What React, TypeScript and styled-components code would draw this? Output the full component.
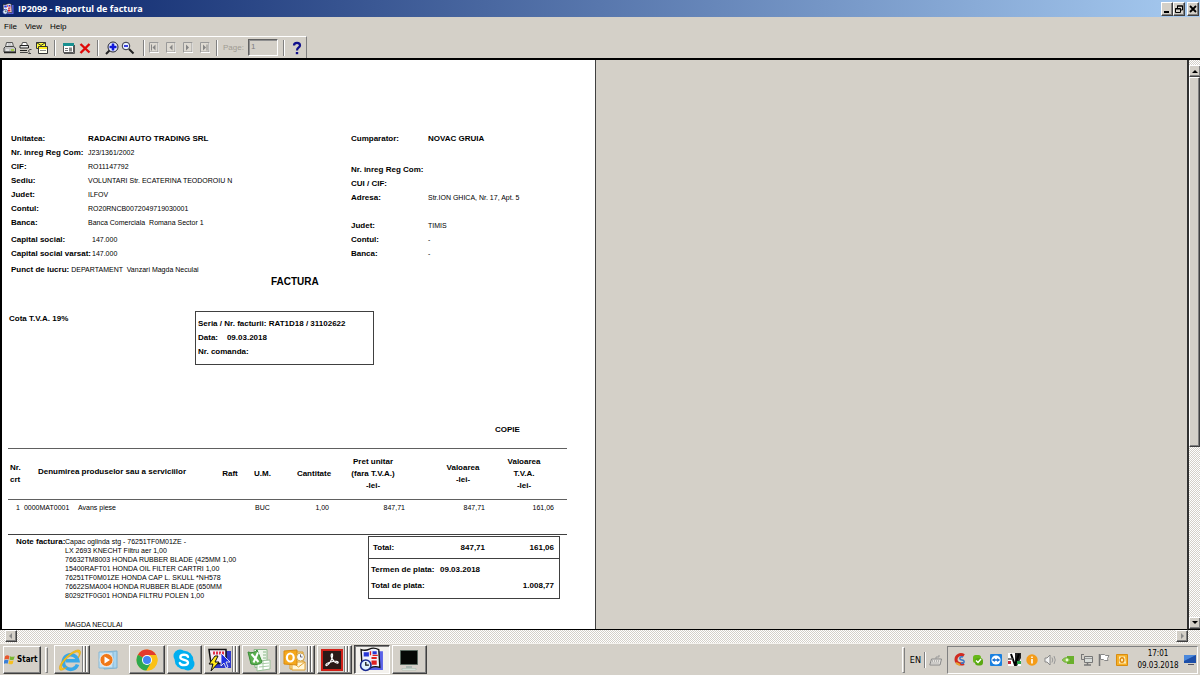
import React from 'react';
import styled, { createGlobalStyle, css } from 'styled-components';

const face = '#d4d0c8';
const ui = '"DejaVu Sans Condensed", "DejaVu Sans", sans-serif';
const print = '"Liberation Sans", Arial, sans-serif';

const raised = css`
  border: 1px solid;
  border-color: #fff #404040 #404040 #fff;
  box-shadow: inset -1px -1px 0 #808080;
`;

const Global = createGlobalStyle`
  *, *::before, *::after { box-sizing: border-box; }
  body { margin: 0; background: ${face}; color: #000; font-family: ${ui}; font-size: 9px; }
  button, input { font: inherit; color: inherit; margin: 0; padding: 0; border: 0; border-radius: 0; background: none; }
  p, dl, dd, dt, h1, h2 { margin: 0; }
  svg { display: block; flex: none; }
`;

const Screen = styled.div`
  display: flex;
  flex-direction: column;
  height: 100vh;
  overflow: hidden;
`;

const TitleBar = styled.header`
  display: flex;
  align-items: center;
  height: 17px;
  padding: 0 1px 0 2px;
  gap: 4px;
  background: linear-gradient(90deg, #0a246a, #a6caf0);
`;

const Title = styled.h1`
  flex: 1;
  color: #fff;
  font-family: "Open Sans", "Noto Sans", sans-serif;
  font-size: 9px;
  line-height: 16px;
  font-weight: 700;
  white-space: nowrap;
`;

const WindowButtons = styled.div`
  display: flex;
`;

const WindowButton = styled.button<{ $apart?: boolean }>`
  ${raised}
  display: grid;
  place-items: center;
  width: 12px;
  height: 14px;
  margin-left: ${p => (p.$apart ? 2 : 0)}px;
  background: ${face};
`;

const MenuBar = styled.nav`
  display: flex;
  height: 19px;
  gap: 8px;
  padding-left: 4px;
`;

const MenuItem = styled.button`
  font-family: ${print};
  font-size: 8px;
  line-height: 18px;
`;

const Tools = styled.div`
  display: flex;
  align-items: center;
  align-self: flex-start;
  height: 22px;
  padding: 0 1px 0 2px;
  border: solid;
  border-width: 1px 1px 0 0;
  border-color: #fff #808080;
`;

const Tool = styled.button<{ $w?: number }>`
  display: grid;
  place-items: center;
  width: ${p => p.$w ?? 16}px;
  height: 18px;
`;

const Groove = styled.span<{ $before: number; $after: number }>`
  width: 2px;
  height: 16px;
  margin: 0 ${p => p.$after}px 0 ${p => p.$before}px;
  border-left: 1px solid #808080;
  border-right: 1px solid #fff;
`;

const PageField = styled.label`
  display: flex;
  align-items: center;
  gap: 4px;
  color: #a09c94;
  font-family: ${print};
  font-size: 8px;
  line-height: 16px;
`;

const PageInput = styled.input`
  width: 30px;
  height: 17px;
  padding: 0 0 3px 2px;
  color: #808080;
  border: 1px solid;
  border-color: #606060 #fff #fff #606060;
  box-shadow: inset 1px 1px 0 #909090;
`;

const Viewer = styled.main`
  flex: 1;
  min-height: 0;
  display: flex;
  border-top: 2px solid #000;
`;

const Canvas = styled.div`
  flex: 1;
  min-width: 0;
  overflow: hidden;
  border-left: 2px solid #000;
  border-bottom: 1px solid #000;
`;

const Paper = styled.article`
  width: 594px;
  min-height: 100%;
  padding: 72px 27px 0 6px;
  background: #fff;
  border-right: 1px solid #404040;
  font-family: ${print};
  font-size: 7px;
  line-height: 14px;
  white-space: pre;
`;

const bold = css`
  font-size: 8px;
  font-weight: 700;
`;

const Strong = styled.span`
  ${bold}
`;

const Parties = styled.section`
  display: grid;
  grid-template-columns: 340px 1fr;
  padding-left: 3px;
`;

const Details = styled.dl`
  display: flex;
  flex-direction: column;
`;

const Detail = styled.div<{ $gap?: number }>`
  display: flex;
  height: 14px;
  margin-top: ${p => p.$gap ?? 0}px;
`;

const Label = styled.dt<{ $auto?: boolean }>`
  ${bold}
  width: ${p => (p.$auto ? 'auto' : '77px')};
  padding-right: ${p => (p.$auto ? 2 : 0)}px;
`;

const Value = styled.dd<{ $indent?: boolean }>`
  padding-left: ${p => (p.$indent ? 4 : 0)}px;
`;

const Heading = styled.h2`
  padding-left: 263px;
  font-size: 10px;
  line-height: 14px;
  margin-top: -2px;
`;

const Series = styled.section`
  display: grid;
  grid-template-columns: 187px 179px;
  margin-top: 22px;
`;

const Vat = styled.p`
  padding: 1px 0 0 1px;
`;

const SeriesBox = styled.div`
  height: 54px;
  padding: 5px 2px;
  border: 1px solid #404040;
`;

const Line = styled.p`
  height: 14px;
`;

const Copy = styled.p`
  margin-top: 58px;
  padding-left: 487px;
`;

const Items = styled.table`
  width: 559px;
  margin-top: 11px;
  border-collapse: collapse;
  table-layout: fixed;
  border-bottom: 1px solid #404040;
`;

const Th = styled.th<{ $left?: number; $right?: number; $bottom?: number; $start?: boolean }>`
  ${bold}
  height: 51px;
  padding: 0 ${p => p.$right ?? 0}px ${p => p.$bottom ?? 0}px ${p => p.$left ?? 0}px;
  border-top: 1px solid #606060;
  border-bottom: 1px solid #606060;
  line-height: 12px;
  text-align: ${p => (p.$start ? 'left' : 'center')};
  vertical-align: middle;
`;

const Td = styled.td<{ $right?: number; $align?: string }>`
  height: 35px;
  padding: 3px ${p => p.$right ?? 0}px 0 0;
  line-height: 10px;
  vertical-align: top;
  text-align: ${p => p.$align ?? 'left'};
`;

const Footer = styled.section`
  display: grid;
  grid-template-columns: 49px 303px 192px;
  padding-left: 8px;
`;

const Notes = styled.div`
  padding-top: 2px;
  line-height: 9px;
`;

const Signature = styled.p`
  margin-top: 20px;
`;

const Totals = styled.dl`
  height: 63px;
  margin-top: 1px;
  border: 1px solid #404040;
`;

const TotalRow = styled.div<{ $first?: boolean }>`
  ${bold}
  display: grid;
  grid-template-columns: ${p => (p.$first ? '56px 56px 1fr' : '69px 47px 1fr')};
  height: ${p => (p.$first ? 22 : 16)}px;
  padding: 0 5px 0 ${p => (p.$first ? 4 : 2)}px;
  line-height: ${p => (p.$first ? 21 : 16)}px;
  border-bottom: ${p => (p.$first ? '1px solid #404040' : '0')};
`;

const TotalLines = styled.div`
  padding-top: 3px;
`;

const Amount = styled.dd<{ $col?: number }>`
  grid-column: ${p => p.$col ?? 'auto'};
  text-align: right;
`;

const dither = css`
  background: repeating-conic-gradient(#fff 0% 25%, ${face} 0% 50%) 0 0 / 2px 2px;
`;

const VScroll = styled.div`
  display: flex;
  flex-direction: column;
  width: 13px;
  padding-top: 5px;
  border-left: 2px solid #303030;
  border-bottom: 1px solid #000;
  ${dither}
`;

const ScrollButton = styled.button`
  ${raised}
  flex: none;
  display: grid;
  place-items: center;
  width: 12px;
  height: 12px;
  background: ${face};
`;

const Thumb = styled.div`
  ${raised}
  flex: 369 0 0;
  background: ${face};
`;

const Track = styled.div`
  flex: 171 0 0;
`;

const HScroll = styled.div`
  display: flex;
  justify-content: space-between;
  height: 13px;
  padding: 0 12px 0 5px;
  ${dither}
`;

const TaskBar = styled.footer`
  display: flex;
  align-items: center;
  height: 32px;
  padding: 0 2px 0 3px;
  background: ${face};
  border-top: 1px solid #f4f2ee;
`;

const StartButton = styled.button`
  ${raised}
  display: flex;
  align-items: center;
  gap: 1px;
  width: 38px;
  height: 28px;
  font-size: 8px;
  font-weight: 700;
`;

const Grip = styled.span<{ $before: number; $after: number }>`
  width: 3px;
  height: 26px;
  margin: 0 ${p => p.$after}px 0 ${p => p.$before}px;
  border: 1px solid;
  border-color: #fff #808080 #808080 #fff;
`;

const Tasks = styled.div`
  display: grid;
  grid-template-columns: repeat(8, 1fr);
  gap: 2px;
  width: 298px;
  margin-left: 8px;
`;

const pressed = css`
  border: 1px solid;
  border-color: #404040 #fff #fff #404040;
  box-shadow: inset 1px 1px 0 #808080;
  background: #f4f2ee;
`;

const Task = styled.button<{ $active?: boolean; $stack?: boolean }>`
  ${p => (p.$active ? pressed : raised)}
  display: flex;
  align-items: center;
  justify-content: ${p => (p.$stack ? 'flex-start' : 'center')};
  height: 29px;
  padding-left: ${p => (p.$stack ? 3 : 0)}px;
  ${p =>
    p.$stack &&
    css`
      background: linear-gradient(90deg, #808080 1px, #fff 1px 2px, transparent 2px 3px, #606060 3px 4px, #fff 4px 5px, transparent 5px) right / 7px 100% no-repeat;
    `}
`;

const FirstTask = styled(Task)`
  width: 36px;
`;

const Player = styled.button`
  width: 24px;
  margin-left: 7px;
`;

const Fill = styled.span`
  flex: 1;
`;

const Lang = styled.button`
  font-size: 9px;
`;

const Tray = styled.div`
  display: flex;
  align-items: center;
  height: 28px;
  margin-left: 3px;
  padding: 0 0 0 3px;
  border: 1px solid;
  border-color: #808080 #fff #fff #808080;
`;

const TrayButton = styled.button<{ $w?: number }>`
  display: grid;
  place-items: center;
  width: ${p => p.$w ?? 18}px;
  height: 18px;
`;

const Clock = styled.time`
  width: 50px;
  margin-left: 2px;
  text-align: center;
  font-size: 8px;
  line-height: 12px;
`;

const AppIcon = ({ s = 12 }: { s?: number }) => (
  <svg width={s} height={s} viewBox="0 0 24 24">
    <path d="M7 4h16v18H9z" fill="#5a62e8" />
    <path d="M2 2.500q4 1.500 8-.5t9 .5l1 17q-5-1.500-9 .5t-8 0z" fill="#eef2fc" stroke="#111" strokeWidth="1.300" />
    <path d="M4.500 5h5v4h-5zM13 4h4v3h-4z" fill="#2838d8" />
    <path d="M12 9.500h5v2h-5zM12 13h5v4h-5z" fill="#e02020" />
    <path d="M11 4v4M13 8h5" stroke="#e02020" strokeWidth="1.300" />
    <circle cx="6.500" cy="17.500" r="5" fill="#dff2ff" stroke="#1a2a90" strokeWidth="1.500" />
    <path d="M6.500 14.500v3h3" fill="none" stroke="#111" strokeWidth="1.200" />
  </svg>
);

const Printer = ({ setup }: { setup?: boolean }) => (
  <svg width="14" height="14" viewBox="0 0 14 14">
    {setup ? (
      <>
        <path d="M3.500 1.500h4l1 3h-6z" fill="#fff" stroke="#555" />
        <path d="M1 4.500h8.500v2.500H1z" fill="#e8e8e8" stroke="#222" />
        <path d="M1 9.500h7" stroke="#222" />
        <path d="M1 11.500h7.500l1.200 1h2.300M12.500 8.500H10.500l-1 1.500 1 1.500" fill="none" stroke="#444" />
      </>
    ) : (
      <>
        <path d="M3.500 1.500h6l1 4.500H2.500z" fill="#fff" stroke="#555" />
        <path d="M4.500 3h4M4.500 5h5" stroke="#999" />
        <path d="M1 7l1.500-1.500h8L12.500 7v4H1z" fill="#c4c4c4" stroke="#444" />
        <path d="M1 11.500h12" stroke="#222" strokeWidth="1.500" />
        <path d="M8 9h3" stroke="#9acd20" strokeWidth="1.500" />
        <path d="M3 9h3" stroke="#fff" />
      </>
    )}
  </svg>
);

const Mail = () => (
  <svg width="14" height="14" viewBox="0 0 14 14">
    <path d="M1.500 1.500h9v6h-9z" fill="#ff3" stroke="#333" />
    <path d="M1.500 1.500l4.500 3 4.500-3" fill="none" stroke="#333" />
    <path d="M3.500 5.500h9v7h-9z" fill="#fffff0" stroke="#333" />
    <path d="M4 6h8v2H4z" fill="#ffee20" />
    <path d="M5 9.500h6" stroke="#888" />
  </svg>
);

const PropWindow = () => (
  <svg width="14" height="14" viewBox="0 0 14 14">
    <path d="M1.500 2.500h10v9h-10z" fill="#fff" stroke="#555" />
    <path d="M1 2h11v3H1z" fill="#189090" />
    <path d="M3 7.500h3M3 9.500h3" stroke="#777" />
    <path d="M7 6.500h3v4H7z" fill="#888" />
    <path d="M2 12.500h10.500V4" fill="none" stroke="#555" />
  </svg>
);

const Cross = () => (
  <svg width="12" height="12" viewBox="0 0 12 12">
    <path d="M1.500 2l9 8.500M10.500 2l-9 9" stroke="#e00808" strokeWidth="2.400" />
  </svg>
);

const Lens = ({ plus }: { plus?: boolean }) =>
  plus ? (
    <svg width="14" height="14" viewBox="0 0 14 14">
      <circle cx="8" cy="6" r="5" fill="#e8f0ff" stroke="#223" />
      <path d="M8 2.500v7M4.500 6h7" stroke="#1018d8" strokeWidth="2.600" />
      <path d="M4.500 9.500L1 13" stroke="#222" strokeWidth="2" />
    </svg>
  ) : (
    <svg width="14" height="14" viewBox="0 0 14 14">
      <circle cx="5" cy="5" r="3.800" fill="#e8f0ff" stroke="#334" />
      <path d="M3 5h4" stroke="#1018d8" strokeWidth="1.600" />
      <path d="M8 8l4.500 4.500" stroke="#222" strokeWidth="2" />
    </svg>
  );

const NavIcon = ({ back, end }: { back?: boolean; end?: boolean }) => (
  <svg width="10" height="11" viewBox="0 0 10 11">
    <path d="M.5.500h8.500v9.500H.5z" fill="#dedad2" stroke="#999" />
    <path d="M1 10.500h9V1" fill="none" stroke="#fff" />
    <g fill="#858585" transform={back ? undefined : 'translate(9.500 0) scale(-1 1)'}>
      <path d="M6.500 2.500v6L3.500 5.500z" />
      {end && <path d="M2 2.500h1v6H2z" />}
    </g>
  </svg>
);

const Help = () => (
  <svg width="10" height="14" viewBox="0 0 10 14">
    <path d="M2 4.500C2 1 8 1 8 4.500 8 6.500 5 6.500 5 9.500" fill="none" stroke="#10108c" strokeWidth="2.200" />
    <path d="M3.800 11h2.400v2.200H3.800z" fill="#10108c" />
  </svg>
);

const arrows = {
  up: 'M0 5h6L3 2z',
  down: 'M0 1h6L3 4z',
  left: 'M4 0v6L1 3z',
  right: 'M2 0v6l3-3z',
};

const Arrow = ({ dir, dim }: { dir: keyof typeof arrows; dim?: boolean }) => (
  <svg width="6" height="6" viewBox="0 0 6 6">
    <path d={arrows[dir]} fill={dim ? '#8a8a8a' : '#000'} />
  </svg>
);

const Flag = () => (
  <svg width="12" height="12" viewBox="0 0 11 11">
    <path d="M1 2q2-1.500 4 0L4.300 5Q2.500 4 .4 5z" fill="#e8552a" />
    <path d="M5.600 2q2 1 4.200 0L9 5q-2 1-4 0z" fill="#7ab832" />
    <path d="M.3 5.800q2-1 3.800 0L3.300 9Q2 8-.4 9z" fill="#3a80d8" />
    <path d="M4.800 5.800q2 1 4 0L8 9q-2 1-4 0z" fill="#f6c020" />
  </svg>
);

const Explorer = () => (
  <svg width="24" height="24" viewBox="0 0 24 24">
    <path d="M19.500 16.500A7.300 7.300 0 1 1 19.800 12.800H7.500" fill="none" stroke="#38a8e8" strokeWidth="3.600" />
    <path d="M2 22C-2 17 14 1 21 2c3 1 1 6-1 8 2-4 1-6-1-6C14 4 1 17 4 20c1 1 3 0 5-1-2 2-5 4-7 3z" fill="#f8c418" stroke="#d89a10" strokeWidth=".5" />
  </svg>
);

const PlayerIcon = () => (
  <svg width="22" height="22" viewBox="0 0 22 22">
    <path d="M7 3l13-1v17l-13 1z" fill="#a8d4ee" stroke="#7ab0d0" />
    <path d="M2 3h14v16H2z" fill="#c4e2f4" stroke="#86b8d6" />
    <circle cx="9.500" cy="11" r="6.500" fill="#f07818" stroke="#fff" strokeWidth=".7" />
    <path d="M7.500 7.500v7l5.500-3.500z" fill="#fff" />
  </svg>
);

const Chrome = () => (
  <svg width="22" height="22" viewBox="0 0 22 22">
    <circle cx="11" cy="11" r="10.500" fill="#fbc116" />
    <path d="M11 11L1.900 5.700A10.500 10.500 0 0 1 20.200 6H11z" fill="#e33b2e" />
    <path d="M11 11L1.900 5.700A10.500 10.500 0 0 0 10.400 21.500L15.300 13.500z" fill="#2da94f" />
    <path d="M11 6h9.200A10.500 10.500 0 0 1 10.400 21.500l5-8z" fill="#fbc116" />
    <circle cx="11" cy="11" r="5" fill="#fff" />
    <circle cx="11" cy="11" r="4" fill="#4285f4" />
  </svg>
);

const Skype = () => (
  <svg width="22" height="22" viewBox="0 0 22 22">
    <circle cx="7" cy="7" r="6.500" fill="#00aff0" />
    <circle cx="15" cy="15" r="6.500" fill="#00aff0" />
    <circle cx="11" cy="11" r="9.300" fill="#00aff0" />
    <path d="M15 7.800C14 5 7.300 5 7.300 8.200c0 3.300 7.700 2 7.700 5.400 0 3.400-7 3.400-8.200.4" fill="none" stroke="#fff" strokeWidth="2.300" strokeLinecap="round" />
  </svg>
);

const Editor = () => (
  <svg width="24" height="24" viewBox="0 0 24 24">
    <path d="M4 3h19v17H4z" fill="#3038c8" />
    <path d="M1 1.500h17v14H3z" fill="#f4e8f4" stroke="#111" strokeWidth="1.500" />
    <path d="M5 5h12" stroke="#e03048" strokeWidth="3" strokeDasharray="2 1" />
    <path d="M13 5v13l3-3 2 5 2-1-2-5h4z" fill="#2030e0" stroke="#fff" strokeWidth=".8" />
    <path d="M7 8l-6 8h4l-2 7 8-9H7l3-6z" fill="#ffe818" stroke="#111" />
  </svg>
);

const Excel = () => (
  <svg width="24" height="24" viewBox="0 0 24 24">
    <path d="M7 1.500h13v18H8z" fill="#eef6ec" stroke="#8ab888" />
    <path d="M16 4h3M16 7h3M16 10h3" stroke="#8ab888" />
    <path d="M10 13l13-1v9l-13 2z" fill="#fff" stroke="#9ac098" />
    <path d="M12 16l10-1M12 19l10-1M16 13v9" stroke="#a8cca6" />
    <path d="M1 4q6 2 9-2l5 12q-4 4-11 2z" fill="#5cb050" stroke="#3a8a38" />
    <path d="M4.500 6l7 8M11 4.500l-4.500 10" stroke="#fff" strokeWidth="2" />
  </svg>
);

const Outlook = () => (
  <svg width="23" height="24" viewBox="0 0 23 24">
    <path d="M7 4h13v17H7z" fill="#fce8a8" stroke="#dc9a20" />
    <path d="M9 14h13v8H9z" fill="#fff6d8" stroke="#e0a030" />
    <path d="M9 14l6.500 5L22 14" fill="none" stroke="#e0a030" />
    <path d="M1 3l13-1v15L1 16z" fill="#f5a81c" stroke="#d88a10" />
    <ellipse cx="7.300" cy="9.500" rx="3.400" ry="4" fill="none" stroke="#fff" strokeWidth="2.200" />
    <circle cx="17.500" cy="9" r="4" fill="#f4f8fc" stroke="#d0a040" />
    <path d="M17.500 6.500V9h2" fill="none" stroke="#667" />
  </svg>
);

const Acrobat = () => (
  <svg width="22" height="22" viewBox="0 0 22 22">
    <path d="M1 1h20v20H1z" fill="#2c1a18" stroke="#d02018" strokeWidth="2" />
    <path d="M10.500 5c2-1 1 4-1 7.500S5 17.500 4.800 16C4.800 14 12 12 15.500 12.300c3 .5 1.500 2.400-.5 1.500C12.500 13 9 7 10.500 5z" fill="none" stroke="#fff" strokeWidth="1.200" />
  </svg>
);

const Terminal = () => (
  <svg width="20" height="22" viewBox="0 0 20 22">
    <path d="M1.500 1.500h17v14h-17z" fill="#050805" stroke="#5a6a60" />
    <path d="M7 17h6v2H7z" fill="#a8b8b0" />
    <path d="M3 19.500h14v1.500H3z" fill="#e8f4ec" stroke="#9ab0a4" strokeWidth=".5" />
  </svg>
);

const Keyboard = () => (
  <svg width="13" height="12" viewBox="0 0 13 12">
    <path d="M2.500 5h10l-1.500 6H.8z" fill="#e4e2de" stroke="#888" />
    <path d="M3 7h8M2.500 9h8" stroke="#888" strokeDasharray="1 1" />
    <path d="M7 5V3h3V1" fill="none" stroke="#999" />
  </svg>
);

const trayIcons: [string, React.ReactNode][] = [
  ['CCleaner', <svg width="13" height="13" viewBox="0 0 13 13"><path d="M10 2.500C6 0 2 3 2 6.500S6 12 10 10.500" fill="none" stroke="#d02a20" strokeWidth="3" /><path d="M9 4C5 3 5 7 8 7s3 4-1 3" fill="none" stroke="#3b78c8" strokeWidth="1.500" /><path d="M2 10l4 2" stroke="#e8a030" strokeWidth="2" /></svg>],
  ['Sync', <svg width="12" height="12" viewBox="0 0 12 12"><rect x="1" y="1" width="8" height="8" rx="2.500" fill="#68b818" /><rect x="3" y="4" width="8" height="7.500" rx="3" fill="#5aa812" /><path d="M4 6.500l2 2L9 5" fill="none" stroke="#fff" strokeWidth="1.500" /></svg>],
  ['TeamViewer', <svg width="12" height="12" viewBox="0 0 12 12"><rect width="12" height="12" rx="1" fill="#1a80e0" /><circle cx="6" cy="6" r="4.600" fill="#fff" /><path d="M1.800 6l3-2v1.300h2.400V4l3 2-3 2V6.700H4.800V8z" fill="#1a70d0" /></svg>],
  ['VNC', <svg width="13" height="13" viewBox="0 0 13 13"><path d="M0 0h13v13H0z" fill="#fff" /><path d="M7 0h6v5L9 13H7z" fill="#222" /><path d="M3 1l4 11 4-11" fill="none" stroke="#000" strokeWidth="2" /><path d="M0 8h3v3H0z" fill="#c02838" /><path d="M9 8h4v3H9z" fill="#28a048" /><path d="M0 6h5" stroke="#555" strokeWidth="1.500" /></svg>],
  ['Information', <svg width="12" height="12" viewBox="0 0 12 12"><circle cx="6" cy="6" r="5.700" fill="#f49c18" /><path d="M5.200 2.400h1.600v1.600H5.200zM5.200 5h1.600v4.500H5.200z" fill="#fff" /></svg>],
  ['Volume', <svg width="12" height="12" viewBox="0 0 12 12"><path d="M1 4h2l3-3v10L3 8H1z" fill="#f4f4f4" stroke="#888" /><path d="M8 3.500q1.500 2.500 0 5M10 2q2.500 4 0 8" fill="none" stroke="#999" /></svg>],
  ['Graphics', <svg width="13" height="10" viewBox="0 0 13 10"><path d="M5 1h7v8H5z" fill="#6ab02c" /><path d="M0 5q4-5 9 0-5 5-9 0z" fill="#8cc84a" stroke="#5c9c2c" strokeWidth=".6" /><circle cx="5" cy="5" r="1.400" fill="#e8f8d8" /></svg>],
  ['Network', <svg width="13" height="13" viewBox="0 0 13 13"><path d="M1.500 1v5.500h3M1 1.500h3" fill="none" stroke="#777" /><path d="M4.500 3.500h8v6h-8z" fill="#d8dcd8" stroke="#777" /><path d="M5 5.500h7" stroke="#999" /><path d="M4 12h7M7.500 10v2" stroke="#777" strokeWidth="1.500" /></svg>],
  ['Action center', <svg width="12" height="13" viewBox="0 0 12 13"><path d="M1.500 1v12" stroke="#777" strokeWidth="1.500" /><path d="M2.500 1.500h4l1 1H11l-1.500 3L10 7.500H6.500l-1-1h-3z" fill="#fff" stroke="#888" /></svg>],
  ['Outlook', <svg width="12" height="12" viewBox="0 0 12 12"><path d="M.5.500h11v11H.5z" fill="#f6b028" stroke="#d88c10" /><path d="M3 2.500h6l1 7H3z" fill="#fdf0c0" /><ellipse cx="6" cy="6" rx="1.800" ry="2.300" fill="none" stroke="#e08a10" strokeWidth="1.500" /></svg>],
];

type Row = { label: string; value: string; gap?: number; auto?: boolean; indent?: boolean; strong?: boolean };

const seller: Row[] = [
  { label: 'Unitatea:', value: 'RADACINI AUTO TRADING SRL', strong: true },
  { label: 'Nr. inreg Reg Com:', value: 'J23/1361/2002' },
  { label: 'CIF:', value: 'RO11147792' },
  { label: 'Sediu:', value: 'VOLUNTARI Str. ECATERINA TEODOROIU N' },
  { label: 'Judet:', value: 'ILFOV' },
  { label: 'Contul:', value: 'RO20RNCB0072049719030001' },
  { label: 'Banca:', value: 'Banca Comerciala  Romana Sector 1' },
  { label: 'Capital social:', value: '147.000', gap: 3, indent: true },
  { label: 'Capital social varsat:', value: '147.000', indent: true },
  { label: 'Punct de lucru:', value: 'DEPARTAMENT  Vanzari Magda Neculai', gap: 2, auto: true },
];

const buyer: Row[] = [
  { label: 'Cumparator:', value: 'NOVAC GRUIA', strong: true },
  { label: 'Nr. inreg Reg Com:', value: '', gap: 17 },
  { label: 'CUI / CIF:', value: '' },
  { label: 'Adresa:', value: 'Str.ION GHICA, Nr. 17, Apt. 5' },
  { label: 'Judet:', value: 'TIMIS', gap: 14 },
  { label: 'Contul:', value: '-' },
  { label: 'Banca:', value: '-' },
];

const notes = `Capac oglinda stg - 76251TF0M01ZE -
LX 2693 KNECHT Filtru aer 1,00
76632TM8003 HONDA RUBBER BLADE (425MM 1,00
15400RAFT01 HONDA OIL FILTER CARTRI 1,00
76251TF0M01ZE HONDA CAP L. SKULL *NH578
76622SMA004 HONDA RUBBER BLADE (650MM
80292TF0G01 HONDA FILTRU POLEN 1,00`;

const Party = ({ rows }: { rows: Row[] }) => (
  <Details>
    {rows.map(r => (
      <Detail key={r.label} $gap={r.gap}>
        <Label $auto={r.auto}>{r.label}</Label>
        <Value $indent={r.indent}>{r.strong ? <Strong>{r.value}</Strong> : r.value}</Value>
      </Detail>
    ))}
  </Details>
);

const Invoice = () => (
  <Paper>
    <Parties>
      <Party rows={seller} />
      <Party rows={buyer} />
    </Parties>
    <Heading>FACTURA</Heading>
    <Series>
      <Vat><Strong>Cota T.V.A. 19%</Strong></Vat>
      <SeriesBox>
        <Line><Strong>Seria / Nr. facturii: RAT1D18 / 31102622</Strong></Line>
        <Line><Strong>Data:    09.03.2018</Strong></Line>
        <Line><Strong>Nr. comanda:</Strong></Line>
      </SeriesBox>
    </Series>
    <Copy><Strong>COPIE</Strong></Copy>
    <Items>
      <colgroup>
        {[14, 56, 144, 16, 49, 54, 64, 80, 82].map((w, i) => <col key={i} width={w} />)}
      </colgroup>
      <thead>
        <tr>
          <Th $start $left={2}>{'Nr.\ncrt'}</Th>
          <Th colSpan={2} $start $left={16} $bottom={4}>Denumirea produselor sau a serviciilor</Th>
          <Th>Raft</Th>
          <Th>U.M.</Th>
          <Th>Cantitate</Th>
          <Th>{'Pret unitar\n(fara T.V.A.)\n-lei-'}</Th>
          <Th $left={36}>{'Valoarea\n-lei-'}</Th>
          <Th $right={4}>{'Valoarea\nT.V.A.\n-lei-'}</Th>
        </tr>
      </thead>
      <tbody>
        <tr>
          <Td $align="right" $right={2}>1</Td>
          <Td>{' 0000MAT0001'}</Td>
          <Td>Avans piese</Td>
          <Td />
          <Td $align="center">BUC</Td>
          <Td $align="right" $right={12}>1,00</Td>
          <Td $align="right">847,71</Td>
          <Td $align="right">847,71</Td>
          <Td $align="right" $right={13}>161,06</Td>
        </tr>
      </tbody>
    </Items>
    <Footer>
      <Strong>Note factura:</Strong>
      <Notes>
        <p>{notes}</p>
        <Signature>MAGDA NECULAI</Signature>
      </Notes>
      <Totals>
        <TotalRow $first>
          <dt>Total:</dt>
          <Amount>847,71</Amount>
          <Amount>161,06</Amount>
        </TotalRow>
        <TotalLines>
          <TotalRow>
            <dt>Termen de plata:</dt>
            <dd>09.03.2018</dd>
          </TotalRow>
          <TotalRow>
            <dt>Total de plata:</dt>
            <Amount $col={3}>1.008,77</Amount>
          </TotalRow>
        </TotalLines>
      </Totals>
    </Footer>
  </Paper>
);

export default function App() {
  return (
    <Screen>
      <Global />
      <TitleBar>
        <AppIcon />
        <Title>IP2099 - Raportul de factura</Title>
        <WindowButtons>
          <WindowButton aria-label="Minimize"><svg width="8" height="8" viewBox="0 0 8 8"><path d="M1 6h5v2H1z" /></svg></WindowButton>
          <WindowButton aria-label="Restore"><svg width="8" height="8" viewBox="0 0 8 8"><path d="M2.500 3V1h5v4H6M.5 3.500h5v4h-5zM2 1h6M0 4h6" fill="none" stroke="#000" /></svg></WindowButton>
          <WindowButton $apart aria-label="Close"><svg width="8" height="8" viewBox="0 0 8 8"><path d="M1 1l6 6M7 1L1 7" stroke="#000" strokeWidth="1.800" /></svg></WindowButton>
        </WindowButtons>
      </TitleBar>
      <MenuBar>
        <MenuItem>File</MenuItem>
        <MenuItem>View</MenuItem>
        <MenuItem>Help</MenuItem>
      </MenuBar>
      <Tools role="toolbar">
        <Tool aria-label="Print"><Printer /></Tool>
        <Tool aria-label="Printer setup"><Printer setup /></Tool>
        <Tool aria-label="Mail"><Mail /></Tool>
        <Groove $before={4} $after={5} />
        <Tool aria-label="Properties"><PropWindow /></Tool>
        <Tool aria-label="Close report"><Cross /></Tool>
        <Groove $before={4} $after={5} />
        <Tool aria-label="Zoom in"><Lens plus /></Tool>
        <Tool aria-label="Zoom out"><Lens /></Tool>
        <Groove $before={7} $after={0} />
        <Tool $w={17} aria-label="First page"><NavIcon back end /></Tool>
        <Tool $w={17} aria-label="Previous page"><NavIcon back /></Tool>
        <Tool $w={17} aria-label="Next page"><NavIcon /></Tool>
        <Tool $w={17} aria-label="Last page"><NavIcon end /></Tool>
        <Groove $before={3} $after={5} />
        <PageField>Page:<PageInput defaultValue="1" /></PageField>
        <Groove $before={5} $after={4} />
        <Tool aria-label="Help topics"><Help /></Tool>
      </Tools>
      <Viewer>
        <Canvas><Invoice /></Canvas>
        <VScroll>
          <ScrollButton aria-label="Scroll up"><Arrow dir="up" /></ScrollButton>
          <Thumb />
          <Track />
          <ScrollButton aria-label="Scroll down"><Arrow dir="down" /></ScrollButton>
        </VScroll>
      </Viewer>
      <HScroll>
        <ScrollButton aria-label="Scroll left"><Arrow dir="left" dim /></ScrollButton>
        <ScrollButton aria-label="Scroll right"><Arrow dir="right" dim /></ScrollButton>
      </HScroll>
      <TaskBar>
        <StartButton><Flag />Start</StartButton>
        <Grip $before={4} $after={6} />
        <FirstTask $stack aria-label="Internet Explorer"><Explorer /></FirstTask>
        <Player aria-label="Media Player"><PlayerIcon /></Player>
        <Tasks>
          <Task aria-label="Chrome"><Chrome /></Task>
          <Task aria-label="Skype"><Skype /></Task>
          <Task $stack aria-label="Editor"><Editor /></Task>
          <Task aria-label="Excel"><Excel /></Task>
          <Task $stack aria-label="Outlook"><Outlook /></Task>
          <Task $stack aria-label="Acrobat"><Acrobat /></Task>
          <Task $active aria-label="Raportul de factura"><AppIcon s={25} /></Task>
          <Task aria-label="Terminal"><Terminal /></Task>
        </Tasks>
        <Fill />
        <Grip $before={0} $after={5} />
        <Lang>EN</Lang>
        <Groove $before={3} $after={0} />
        <TrayButton aria-label="Keyboard"><Keyboard /></TrayButton>
        <Tray>
          {trayIcons.map(([name, icon]) => <TrayButton key={name} aria-label={name}>{icon}</TrayButton>)}
          <Clock>17:01<br />09.03.2018</Clock>
          <TrayButton $w={14} aria-label="Show desktop">
            <svg width="12" height="12" viewBox="0 0 12 12"><path d="M0 1h12v8H0z" fill="#1c4ea8" /><path d="M0 1h12L0 7z" fill="#4a88dc" /><path d="M4 10h6v1H4z" fill="#556" /></svg>
          </TrayButton>
        </Tray>
      </TaskBar>
    </Screen>
  );
}
